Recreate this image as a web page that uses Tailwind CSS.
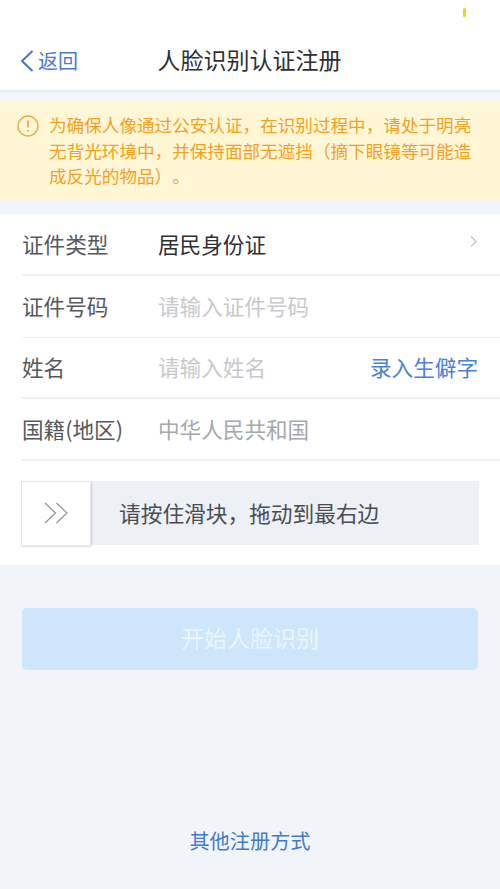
<!DOCTYPE html>
<html lang="zh-CN">
<head>
    <meta charset="UTF-8">
    <meta name="viewport" content="width=device-width, initial-scale=1.0">
    <title>人脸识别认证注册</title>
    <script src="https://cdn.jsdelivr.net/npm/@tailwindcss/browser@4"></script>
</head>
<body class="w-[500px] h-[889px] overflow-hidden bg-[#f1f4f9] font-['Noto_Sans_CJK_SC','Liberation_Sans',sans-serif] flex flex-col">

    <!-- status bar + nav -->
    <header class="h-[92px] shrink-0 bg-white border-b-2 border-[#e9ecf2] relative">
        <div class="absolute left-[463px] top-[8px] w-[3px] h-[9px] rounded-sm bg-[#ecd60e]"></div>
        <div class="h-[45px]"></div>
        <div class="h-[30px] flex items-center justify-center relative">
            <a class="absolute left-[20px] top-[1px] h-[30px] flex items-center gap-[4px] text-[20px] text-[#4a7bd0]">
                <svg class="w-[14px] h-[22px]" viewBox="0 0 14 22" fill="none" stroke="#4a74d0" stroke-width="2"><path d="M12.5 1 L2 11 L12.5 21"/></svg>
                <span>返回</span>
            </a>
            <h1 class="text-[23px] font-normal text-[#2f2f33] leading-[30px] pb-[2px] -ml-[1px]">人脸识别认证注册</h1>
        </div>
    </header>

    <!-- notice -->
    <div class="mt-[9px] h-[98px] shrink-0 bg-[#fff6d6] flex pl-[17px] pr-[24px] pt-[11px] gap-[10px]">
        <svg class="w-[22px] h-[22px] mt-[3px] shrink-0" viewBox="0 0 22 22" fill="none" stroke="#e3ae45" stroke-width="1.4"><circle cx="11" cy="11" r="10"/><path d="M11 5.5 V12.5" stroke-width="1.8"/><path d="M11 15 V16.6" stroke-width="1.8"/></svg>
        <p class="w-[427px] text-[17.6px] leading-[25.5px] text-[#f0a11f] [text-spacing-trim:space-all]">为确保人像通过公安认证，在识别过程中，请处于明亮无背光环境中，并保持面部无遮挡（摘下眼镜等可能造成反光的物品）。</p>
    </div>

    <!-- form -->
    <section class="mt-[15px] h-[351px] shrink-0 bg-white pl-[22px] flex flex-col">
        <div class="h-[62px] flex items-center border-b-2 border-[#f0f1f4] text-[21.6px] pr-[22px]">
            <span class="w-[136px] text-[#55585e]">证件类型</span>
            <span class="flex-1 text-[#2f2f33]">居民身份证</span>
            <svg class="w-[8px] h-[13px] -mt-[6px]" viewBox="0 0 8 13" fill="none" stroke="#c8cace" stroke-width="1.5"><path d="M1 1.5 L6 6.5 L1 11.5"/></svg>
        </div>
        <div class="h-[62px] flex items-center border-b border-[#f0f1f4] text-[21.6px]">
            <span class="w-[136px] text-[#55585e]">证件号码</span>
            <span class="text-[#c6c8ce]">请输入证件号码</span>
        </div>
        <div class="h-[61px] flex items-center border-b-2 border-[#f0f1f4] text-[21.6px] pr-[22px]">
            <span class="w-[136px] text-[#55585e]">姓名</span>
            <span class="flex-1 text-[#c6c8ce]">请输入姓名</span>
            <span class="text-[#4a80d6]">录入生僻字</span>
        </div>
        <div class="h-[62px] flex items-center border-b-2 border-[#f0f1f4] text-[21.6px]">
            <span class="w-[136px] text-[#55585e]">国籍(地区)</span>
            <span class="text-[#a4a7ad]">中华人民共和国</span>
        </div>

        <!-- slider -->
        <div class="mt-[20px] mr-[21px] -ml-px h-[64px] bg-[#edf0f5] flex items-center relative">
            <div class="w-[70px] h-[65px] shrink-0 bg-white border border-[#e3e4e8] shadow-[1px_1px_2px_rgba(0,0,0,0.12)] flex items-center justify-center">
                <svg class="w-[24px] h-[22px]" viewBox="0 0 24 22" fill="none" stroke="#8c8e94" stroke-width="1.1"><path d="M1 1 L11.5 11 L1 21"/><path d="M12.5 1 L23 11 L12.5 21"/></svg>
            </div>
            <span class="ml-[28px] text-[21.7px] text-[#4b4d52] [text-spacing-trim:space-all]">请按住滑块，拖动到最右边</span>
        </div>
    </section>

    <!-- submit -->
    <div class="px-[22px] mt-[43px]">
        <div class="h-[62px] rounded-[5px] bg-[#cde6fb] flex items-center justify-center text-[23px] text-[#ecf5fd] pb-[4px]">开始人脸识别</div>
    </div>

    <div class="mt-[156px] text-center text-[20.2px] leading-[30px] text-[#3f7bc9]">其他注册方式</div>

</body>
</html>
